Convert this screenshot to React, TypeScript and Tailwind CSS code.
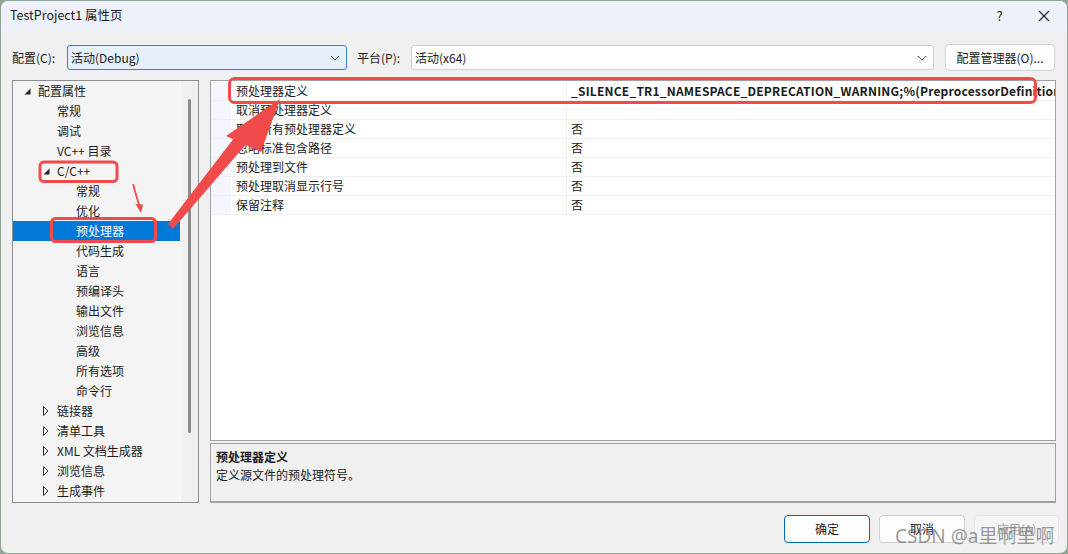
import React from 'react';

type Node = { t: string; l: 0 | 1 | 2; a?: 'open' | 'closed'; sel?: boolean };

const tree: Node[] = [
  { t: '配置属性', l: 0, a: 'open' },
  { t: '常规', l: 1 },
  { t: '调试', l: 1 },
  { t: 'VC++ 目录', l: 1 },
  { t: 'C/C++', l: 1, a: 'open' },
  { t: '常规', l: 2 },
  { t: '优化', l: 2 },
  { t: '预处理器', l: 2, sel: true },
  { t: '代码生成', l: 2 },
  { t: '语言', l: 2 },
  { t: '预编译头', l: 2 },
  { t: '输出文件', l: 2 },
  { t: '浏览信息', l: 2 },
  { t: '高级', l: 2 },
  { t: '所有选项', l: 2 },
  { t: '命令行', l: 2 },
  { t: '链接器', l: 1, a: 'closed' },
  { t: '清单工具', l: 1, a: 'closed' },
  { t: 'XML 文档生成器', l: 1, a: 'closed' },
  { t: '浏览信息', l: 1, a: 'closed' },
  { t: '生成事件', l: 1, a: 'closed' },
];

const props: { n: string; v: string; bold?: boolean }[] = [
  { n: '预处理器定义', v: '_SILENCE_TR1_NAMESPACE_DEPRECATION_WARNING;%(PreprocessorDefinitions)', bold: true },
  { n: '取消预处理器定义', v: '' },
  { n: '取消所有预处理器定义', v: '否' },
  { n: '忽略标准包含路径', v: '否' },
  { n: '预处理到文件', v: '否' },
  { n: '预处理取消显示行号', v: '否' },
  { n: '保留注释', v: '否' },
];

const indent = ['pl-[11px]', 'pl-[30px]', 'pl-[49px]'];

function Chevron() {
  return (
    <svg width="10" height="6" viewBox="0 0 10 6" className="shrink-0">
      <path d="M1 1 L5 5 L9 1" fill="none" stroke="#555" strokeWidth="1" />
    </svg>
  );
}

function Arrow({ a, sel }: { a?: 'open' | 'closed'; sel?: boolean }) {
  if (a === 'open')
    return (
      <svg width="7" height="7" viewBox="0 0 7 7">
        <polygon points="6.5,0.5 6.5,6.5 0.5,6.5" fill={sel ? '#fff' : '#262626'} />
      </svg>
    );
  if (a === 'closed')
    return (
      <svg width="6" height="10" viewBox="0 0 6 10">
        <polygon points="0.5,0.5 5,5 0.5,9.5" fill="none" stroke="#333" strokeWidth="1" />
      </svg>
    );
  return null;
}

export default function App() {
  return (
    <div className="relative w-[1068px] h-[554px] bg-[#8fa797] p-px font-['Noto_Sans_CJK_SC','Noto_Sans',sans-serif] text-[12px] text-[#1b1b1b] overflow-hidden">
      <div className="flex h-full flex-col rounded-[7px] bg-[#f0f0f0] overflow-hidden">
        {/* title bar */}
        <div className="flex h-[29px] shrink-0 items-center bg-[#eef1f9] pl-[9px]">
          <span className="text-[12.5px]">TestProject1 属性页</span>
          <div className="ml-auto flex items-center">
            <span className="w-[46px] pl-[3px] text-center text-[13px]">?</span>
            <svg width="46" height="14" viewBox="0 0 46 14">
              <path d="M18 2 L28 12 M28 2 L18 12" stroke="#222" strokeWidth="1.1" />
            </svg>
          </div>
        </div>

        {/* body */}
        <div className="flex flex-1 flex-col px-[11px] pt-[14px]">
          {/* config row */}
          <div className="flex h-[27px] shrink-0 items-center">
            <span className="w-[55px] shrink-0">配置(C):</span>
            <div className="flex h-[25px] w-[280px] shrink-0 items-center justify-between rounded-[3px] border border-[#3b7ed1] bg-[#e6f0fb] pl-[3px] pr-[6px]">
              <span>活动(Debug)</span>
              <Chevron />
            </div>
            <span className="ml-[10px] w-[54px] shrink-0">平台(P):</span>
            <div className="flex h-[25px] w-[523px] shrink-0 items-center justify-between rounded-[3px] border border-[#cfcfcf] bg-white pl-[3px] pr-[6px]">
              <span>活动(x64)</span>
              <Chevron />
            </div>
            <div className="ml-[11px] flex h-[27px] w-[110px] shrink-0 items-center justify-center rounded-[4px] border border-[#d2d2d2] bg-[#fdfdfd]">
              配置管理器(O)...
            </div>
          </div>

          {/* main */}
          <div className="mt-[9px] flex h-[423px] shrink-0 gap-[11px]">
            {/* tree */}
            <div className="flex w-[187px] shrink-0 border border-[#8a8d92] bg-[#f4f4f4]">
              <div className="flex flex-1 flex-col">
                {tree.map((n, i) => (
                  <div
                    key={i}
                    className={`flex h-[20px] shrink-0 items-center ${indent[n.l]} ${n.sel ? 'bg-[#0078d7] text-white' : ''}`}
                  >
                    <span className="flex w-[14px] items-center">
                      <Arrow a={n.a} sel={n.sel} />
                    </span>
                    <span className="whitespace-nowrap">{n.t}</span>
                  </div>
                ))}
              </div>
              <div className="flex w-[18px] justify-center border-l border-[#fafafa] bg-[#f0f0f0] pt-[18px]">
                <div className="h-[334px] w-[3px] rounded-full bg-[#8b8b8b]" />
              </div>
            </div>

            {/* right */}
            <div className="flex min-w-0 flex-1 flex-col gap-[2px]">
              <div className="h-[361px] overflow-hidden border border-[#a0a0a0] bg-white pt-px">
                {props.map((p, i) => (
                  <div key={i} className="flex h-[19px] border-b border-[#f0f0f4]">
                    <div className="w-[20px] shrink-0 bg-[#f4f6fb]" />
                    <div className="flex w-[335px] shrink-0 items-center pl-[5px] whitespace-nowrap">{p.n}</div>
                    <div
                      className={`flex min-w-0 flex-1 items-center overflow-hidden border-l border-[#f0f0f4] pl-[4px] whitespace-nowrap ${p.bold ? 'font-bold tracking-[0.2px]' : ''}`}
                    >
                      {p.v}
                    </div>
                  </div>
                ))}
              </div>
              <div className="flex h-[60px] flex-col border border-b-2 border-[#a0a0a0] bg-[#f0f0f0] pl-[5px] pt-[3px]">
                <span className="h-[19px] font-bold leading-[19px]">预处理器定义</span>
                <span className="h-[18px] leading-[18px]">定义源文件的预处理符号。</span>
              </div>
            </div>
          </div>

          {/* buttons */}
          <div className="mt-[12px] -mr-[3px] flex justify-end gap-[9px]">
            <div className="flex h-[28px] w-[86px] items-center justify-center rounded-[4px] border border-[#0067c0] bg-white">确定</div>
            <div className="flex h-[28px] w-[86px] items-center justify-center rounded-[4px] border border-[#d0d0d0] bg-[#fdfdfd]">取消</div>
            <div className="flex h-[28px] w-[85px] items-center justify-center rounded-[4px] border border-[#e5e5e5] bg-[#f5f5f5] text-[#a0a0a0]">应用(A)</div>
          </div>
        </div>
      </div>

      {/* watermark */}
      <div className="pointer-events-none absolute left-[895px] top-[522px] text-[19px] text-[rgba(120,120,120,0.75)] font-['Noto_Sans','Noto_Sans_CJK_SC',sans-serif] whitespace-nowrap">
        CSDN @a里啊里啊
      </div>

      {/* annotations */}
      <svg className="pointer-events-none absolute left-0 top-0" width="1068" height="554" viewBox="0 0 1068 554">
        <g fill="none" stroke="#f04a4a" strokeWidth="3">
          <rect x="229.5" y="78.5" width="806" height="24" rx="5" />
          <rect x="40" y="162" width="77" height="19.5" rx="4" />
          <rect x="51.5" y="218.5" width="104" height="23" rx="4" />
        </g>
        {/* small arrow */}
        <line x1="133" y1="184" x2="139" y2="205" stroke="#f04a4a" strokeWidth="1.8" />
        <polygon points="135.5,204 143,204.5 141,213" fill="#f04a4a" />
        {/* big arrow */}
        <polygon points="168,224 173,229 248,142 238,133" fill="#f04a4a" />
        <polygon points="280,99 226,136 261,152" fill="#f04a4a" />
      </svg>
    </div>
  );
}
